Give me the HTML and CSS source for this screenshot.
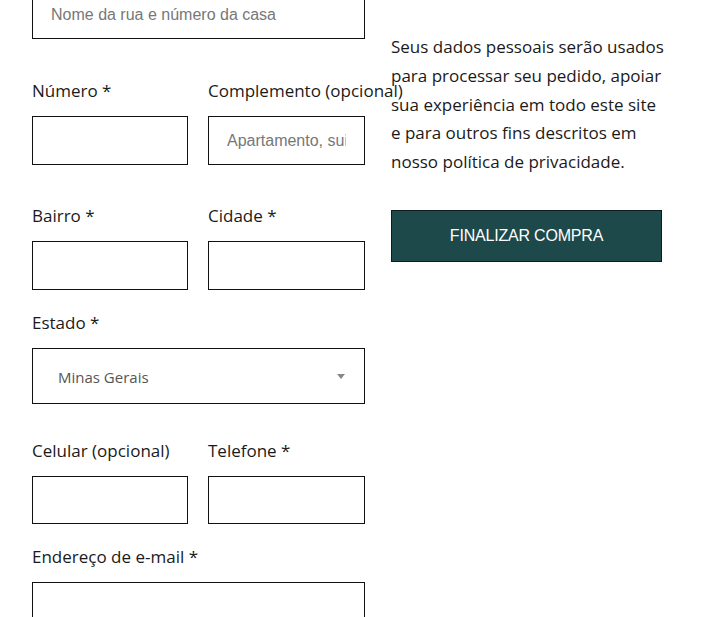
FILE: index.html
```html
<!DOCTYPE html>
<html lang="pt-BR">
<head>
<meta charset="utf-8">
<title>Checkout</title>
<link rel="stylesheet" href="styles.css">
</head>
<body>
<div class="page">
  <form class="billing">
    <input class="field first" type="text" placeholder="Nome da rua e número da casa">

    <div class="row gap-lg">
      <div class="col">
        <label class="lbl">Número *</label>
        <input class="field" type="text">
      </div>
      <div class="col">
        <label class="lbl">Complemento (opcional)</label>
        <input class="field" type="text" placeholder="Apartamento, suite, unidade etc.">
      </div>
    </div>

    <div class="row gap-lg">
      <div class="col">
        <label class="lbl">Bairro *</label>
        <input class="field" type="text">
      </div>
      <div class="col">
        <label class="lbl">Cidade *</label>
        <input class="field" type="text">
      </div>
    </div>

    <div class="block gap-sm">
      <label class="lbl">Estado *</label>
      <div class="select">
        <span class="select-value">Minas Gerais</span>
        <span class="caret"></span>
      </div>
    </div>

    <div class="row gap-md">
      <div class="col">
        <label class="lbl">Celular (opcional)</label>
        <input class="field short" type="text">
      </div>
      <div class="col">
        <label class="lbl">Telefone *</label>
        <input class="field short" type="text">
      </div>
    </div>

    <div class="block gap-sm">
      <label class="lbl">Endereço de e-mail *</label>
      <input class="field" type="email">
    </div>
  </form>

  <aside class="summary">
    <p class="privacy">Seus dados pessoais serão usados<br>para processar seu pedido, apoiar<br>sua experiência em todo este site<br>e para outros fins descritos em<br>nosso política de privacidade.</p>
    <button class="place-order" type="button">FINALIZAR COMPRA</button>
  </aside>
</div>
</body>
</html>
```

FILE: styles.css
```css
* { box-sizing: border-box; }

html, body {
  margin: 0;
  padding: 0;
  background: #fff;
  overflow: hidden;
}

.page {
  display: flex;
  align-items: flex-start;
  padding-left: 32px;
  gap: 26px;
}

.billing {
  width: 333px;
  flex: none;
  display: flex;
  flex-direction: column;
}

.lbl {
  display: block;
  font-family: "Open Sans", "Noto Sans", sans-serif;
  font-size: 17px;
  line-height: 24px;
  height: 24px;
  color: #1a1a1a;
  white-space: nowrap;
  margin-bottom: 13px;
}

.field {
  display: block;
  width: 100%;
  height: 49px;
  margin: 0;
  border: 1px solid #111;
  border-radius: 0;
  background: #fff;
  padding: 0 18px;
  font-family: "Liberation Sans", Arial, sans-serif;
  font-size: 16px;
  color: #333;
  outline: none;
}

.field.short { height: 48px; }

.field::placeholder { color: #777; }

.field.first {
  margin-top: -10px;
}

.row {
  display: flex;
  gap: 20px;
}

.row .col {
  flex: 1 1 0;
  min-width: 0;
}

.row .col:first-child { flex: 0 0 156px; }

.gap-lg { margin-top: 39px; }
.gap-md { margin-top: 35px; }
.gap-sm { margin-top: 21px; }

.row:first-of-type { margin-top: 40px; }

.select {
  display: flex;
  align-items: center;
  justify-content: space-between;
  height: 56px;
  border: 1px solid #111;
  padding: 2px 19px 0 25px;
}

.select-value {
  font-family: "Open Sans", "Noto Sans", sans-serif;
  font-size: 15px;
  color: #555;
}

.caret {
  width: 0;
  height: 0;
  border-left: 4px solid transparent;
  border-right: 4px solid transparent;
  border-top: 5px solid #888;
  margin-top: -1px;
}

.summary {
  width: 271px;
  flex: none;
  padding-top: 33px;
}

.privacy {
  margin: 0;
  font-family: "Open Sans", "Noto Sans", sans-serif;
  font-size: 17px;
  line-height: 28.8px;
  color: #1a1a1a;
  white-space: nowrap;
}

.place-order {
  display: block;
  width: 100%;
  height: 52px;
  margin-top: 33px;
  background: #1e494a;
  border: 1px solid #0c1c1c;
  color: #fff;
  font-family: "Liberation Sans", Arial, sans-serif;
  font-size: 16px;
  letter-spacing: -0.2px;
  cursor: pointer;
}
```
